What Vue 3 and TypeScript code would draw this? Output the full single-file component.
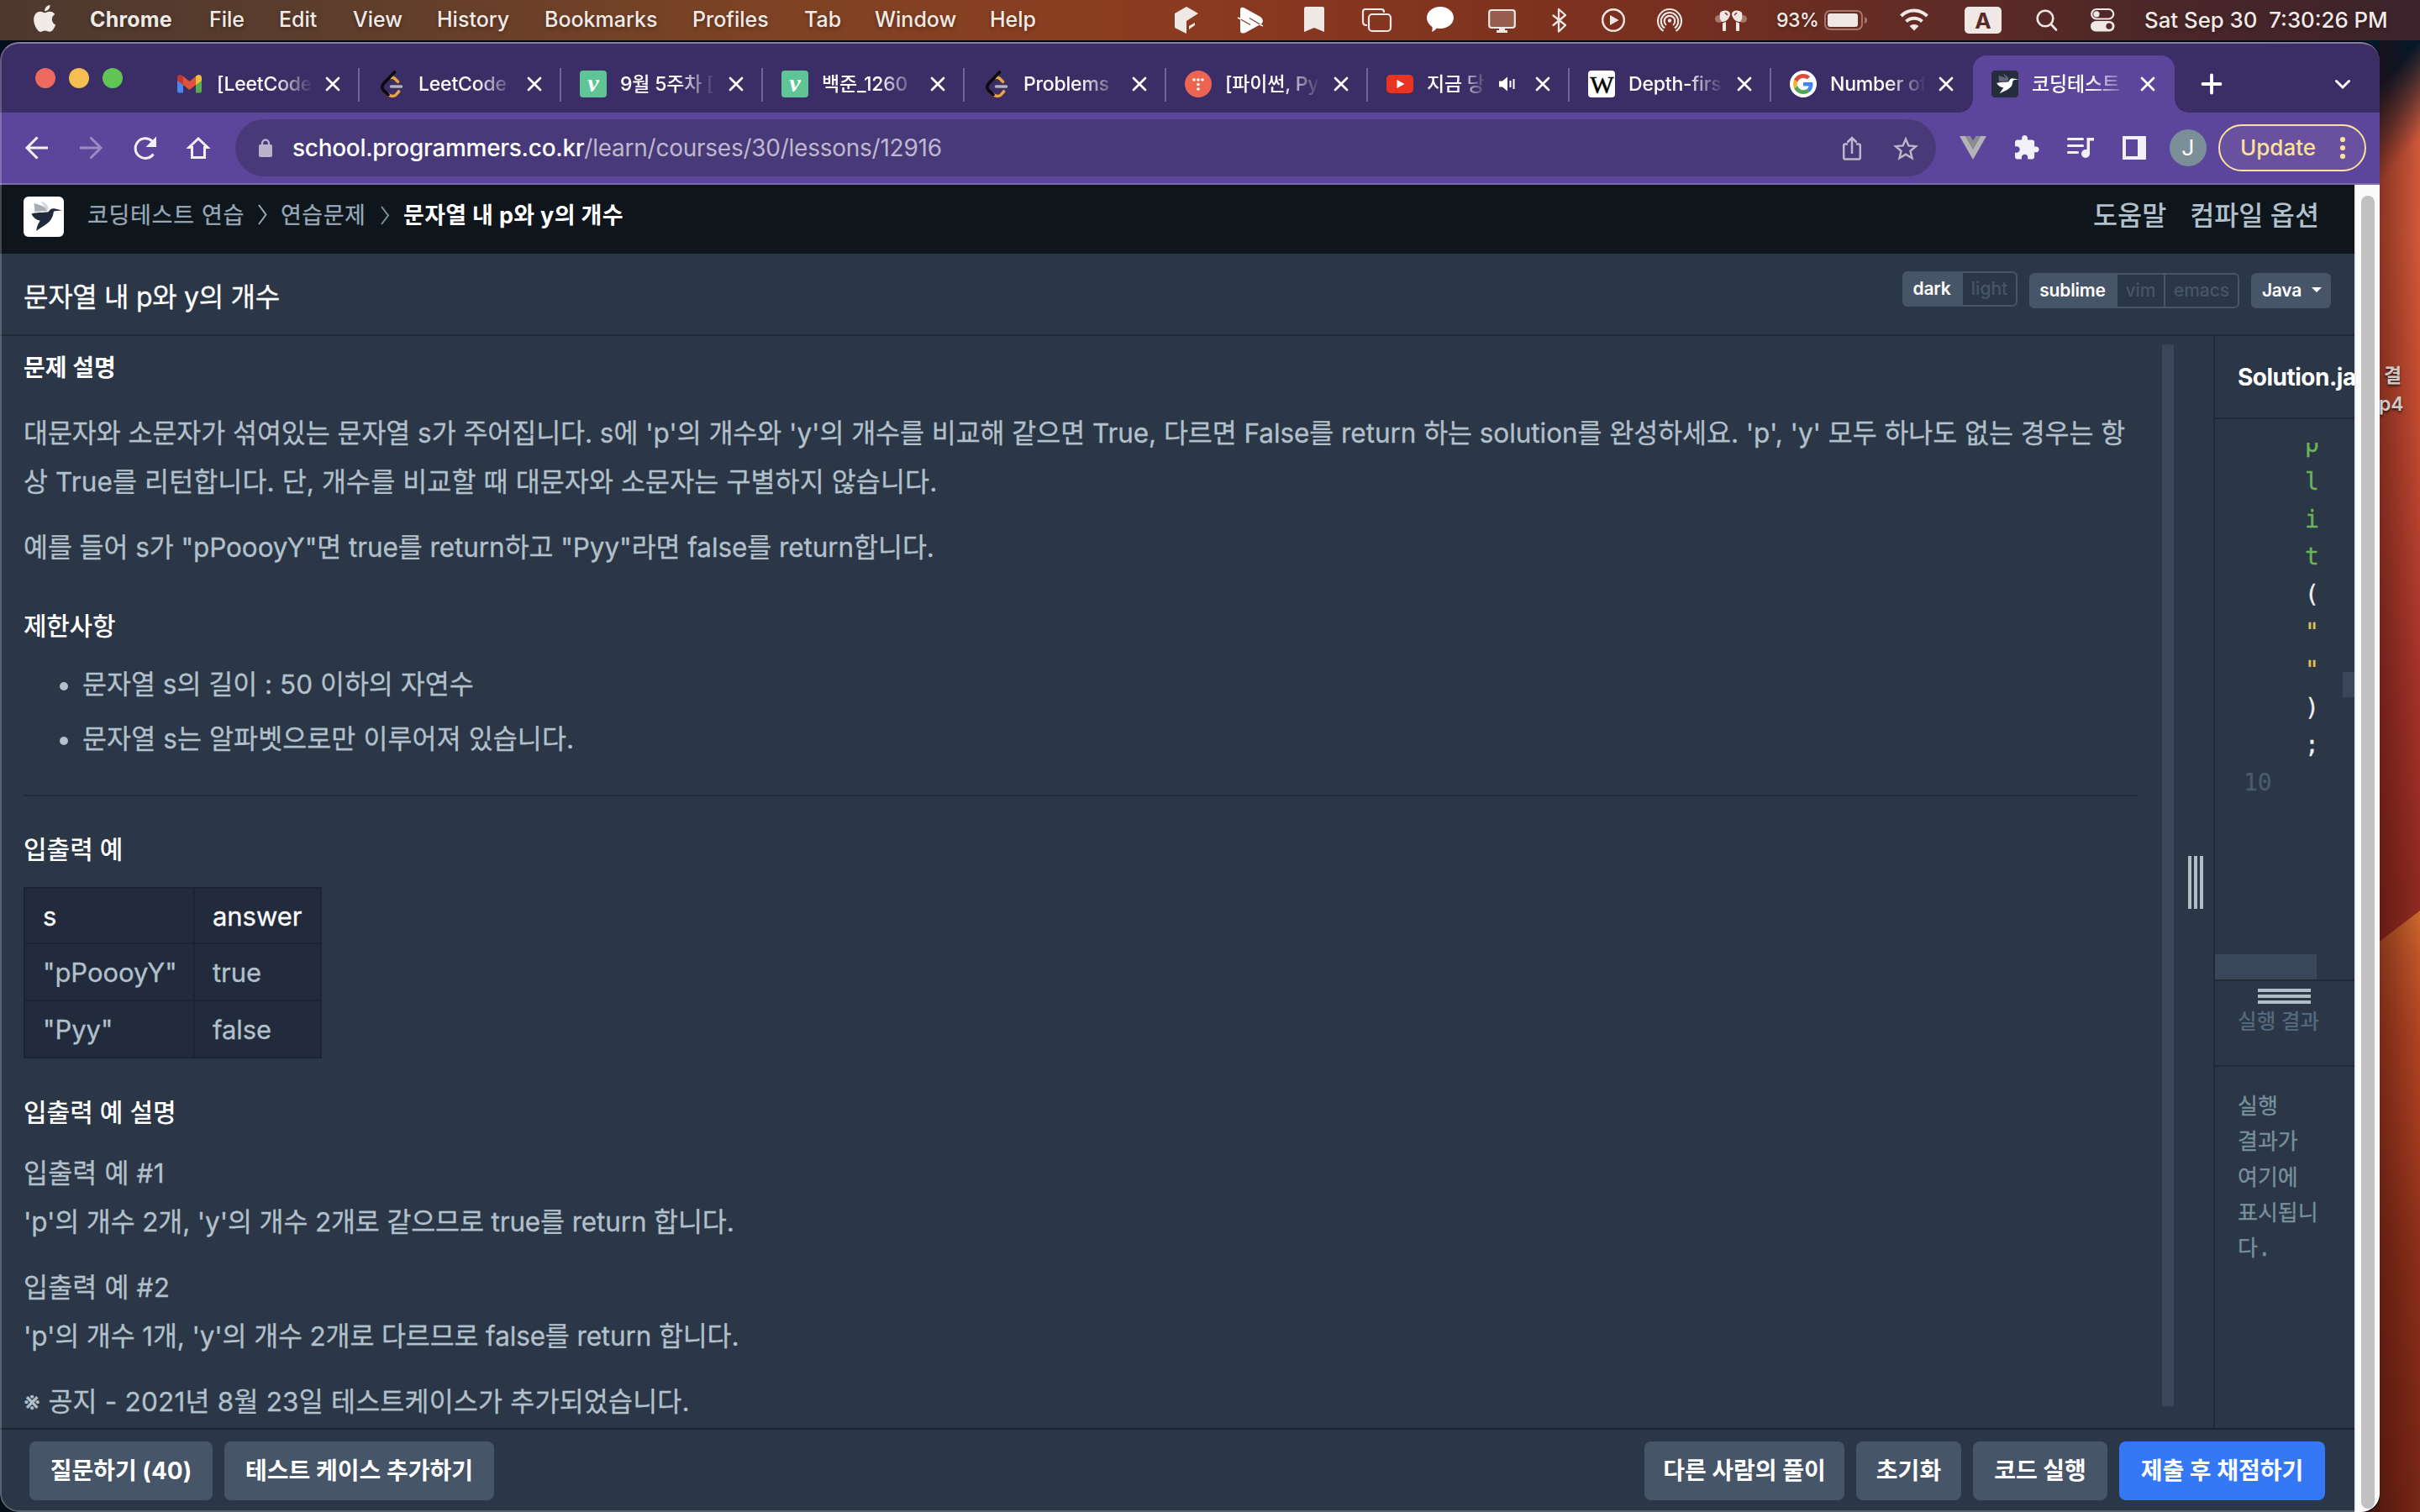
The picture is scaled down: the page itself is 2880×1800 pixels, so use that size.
<script setup lang="ts">
interface MenuItem { label: string; width: number; bold?: boolean }
interface Tab { icon: string; title: string; audio?: boolean; active?: boolean }

const menu: MenuItem[] = [
  { label: 'Chrome', width: 142, bold: true },
  { label: 'File', width: 83 },
  { label: 'Edit', width: 88 },
  { label: 'View', width: 100 },
  { label: 'History', width: 128 },
  { label: 'Bookmarks', width: 176 },
  { label: 'Profiles', width: 133 },
  { label: 'Tab', width: 84 },
  { label: 'Window', width: 137 },
  { label: 'Help', width: 100 },
]

const tabs: Tab[] = [
  { icon: 'gmail', title: '[LeetCode' },
  { icon: 'leet', title: 'LeetCode' },
  { icon: 'velog', title: '9월 5주차 [' },
  { icon: 'velog', title: '백준_1260' },
  { icon: 'leet', title: 'Problems' },
  { icon: 'tistory', title: '[파이썬, Py' },
  { icon: 'youtube', title: '지금 당', audio: true },
  { icon: 'wiki', title: 'Depth-firs' },
  { icon: 'google', title: 'Number of' },
  { icon: 'bird', title: '코딩테스트', active: true },
]

const code: { ch: string; kind: string }[] = [
  { ch: 'p', kind: 'fn' },
  { ch: 'l', kind: 'fn' },
  { ch: 'i', kind: 'fn' },
  { ch: 't', kind: 'fn' },
  { ch: '(', kind: 'pl' },
  { ch: '"', kind: 'str' },
  { ch: '"', kind: 'str' },
  { ch: ')', kind: 'pl' },
  { ch: ';', kind: 'pl' },
]

const rows: [string, string][] = [
  ['"pPoooyY"', 'true'],
  ['"Pyy"', 'false'],
]
</script>

<template>
  <div class="desktop">
    <header class="menubar">
      <svg class="apple" width="107" height="48" viewBox="0 0 107 48">
        <path transform="translate(37.2 6) scale(1.33)" fill="#f1eae7" d="M12.152 6.896c-.948 0-2.415-1.078-3.96-1.04-2.04.027-3.91 1.183-4.961 3.014-2.117 3.675-.546 9.103 1.519 12.09 1.013 1.454 2.208 3.09 3.792 3.039 1.52-.065 2.09-.987 3.935-.987 1.831 0 2.35.987 3.96.948 1.637-.026 2.676-1.48 3.676-2.948 1.156-1.688 1.636-3.325 1.662-3.415-.039-.013-3.182-1.221-3.22-4.857-.026-3.04 2.48-4.494 2.597-4.559-1.429-2.09-3.623-2.324-4.39-2.376-2-.156-3.675 1.09-4.61 1.09zM15.53 3.83c.843-1.012 1.4-2.427 1.245-3.83-1.207.052-2.662.805-3.532 1.818-.78.896-1.454 2.338-1.273 3.714 1.338.104 2.715-.688 3.559-1.701" />
      </svg>
      <nav class="menus">
        <span v-for="m in menu" :key="m.label" :class="{ bold: m.bold }" :style="{ width: m.width + 'px' }">{{ m.label }}</span>
      </nav>
      <div class="status">
        <svg width="70" height="48" viewBox="1380 0 70 48">
          <path fill="#efe8e5" d="M1412 8l14 8-14 9v15l-14-7V16zM1415 31l7-4v3l-7 5z" />
        </svg>
        <svg width="76" height="48" viewBox="1450 0 76 48">
          <path fill="#fff" d="M1476 12q0-4 4-3l20 11q3 2 3 5-.500 3-3 4l-18 10q-6 2-6-3z" />
          <path stroke="#8a3a20" stroke-width="1.300" d="M1473 21l15 8.500M1487 21.500l15 9" />
          <path stroke="#fff" stroke-width="1.600" d="M1473 21l4 2M1499 29l4 2" />
        </svg>
        <svg width="74" height="48" viewBox="1526 0 74 48">
          <path fill="#efe8e5" d="M1552 10q0-2 2-2h20q2 0 2 2v28l-12-5-12 5z" />
        </svg>
        <svg width="76" height="48" viewBox="1600 0 76 48" fill="none" stroke="#efe8e5" stroke-width="2.200">
          <path d="M1627 30h-1q-4 0-4-4V14q0-3 3-3h19q3 0 3 3v1" />
          <rect x="1629" y="17" width="26" height="20" rx="4" />
        </svg>
        <svg width="74" height="48" viewBox="1676 0 74 48">
          <path fill="#fff" d="M1714 8c9 0 16 6 16 13s-7 13-16 13q-2 0-4-.500-3 3.500-6 4.500 1-3 .500-6c-4-2.500-6.500-6.500-6.500-11 0-7 7-13 16-13z" />
        </svg>
        <svg width="70" height="48" viewBox="1750 0 70 48">
          <rect x="1772.200" y="12" width="30.600" height="21" rx="3" fill="#985e4d" stroke="#efe8e5" stroke-width="2.200" />
          <path fill="#efe8e5" d="M1784 34h7v2h3v3h-13v-3h3z" />
        </svg>
        <svg width="68" height="48" viewBox="1820 0 68 48">
          <path fill="none" stroke="#efe8e5" stroke-width="2.300" stroke-linejoin="round" stroke-linecap="round" d="M1848.500 18.500l14.500 11.500-8 7.500V11l8 7-14.500 12" />
        </svg>
        <svg width="64" height="48" viewBox="1888 0 64 48">
          <circle cx="1920" cy="24" r="12.800" fill="none" stroke="#efe8e5" stroke-width="2.400" />
          <path fill="#efe8e5" d="M1916 18l10.500 6-10.500 6z" />
        </svg>
        <svg width="72" height="48" viewBox="1952 0 72 48" fill="none" stroke="#efe8e5" stroke-width="2.100">
          <circle cx="1987" cy="24.500" r="2.200" fill="#efe8e5" stroke="none" />
          <path d="M1979.500 36.800a14 14 0 1 1 15 0M1981 33.500a10.200 10.200 0 1 1 12 0M1983 30a6.300 6.300 0 1 1 8 0" />
        </svg>
        <svg width="76" height="48" viewBox="2024 0 76 48">
          <circle cx="2045.500" cy="22.500" r="4.500" fill="#a97467" />
          <circle cx="2074.500" cy="22.500" r="4.500" fill="#a97467" />
          <path fill="#efe8e5" d="M2047 15c4-4 11-3 12 1 0 6-5 10-9 10-3 0-4-6-3-11zM2050 27.500l4-1.500v10.500q-2 1-4 0zM2073 15c-4-4-11-3-12 1 0 6 5 10 9 10 3 0 4-6 3-11zM2070 27.500l-4-1.500v10.500q2 1 4 0z" />
          <path stroke="#7a3526" stroke-width="1.500" d="M2053 15l3 3M2067 15l-3 3" />
        </svg>
        <span class="pct">93%</span>
        <svg width="66" height="48" viewBox="2164 0 66 48">
          <rect x="2172" y="13" width="44" height="22" rx="6" fill="none" stroke="#a5786f" stroke-width="2" />
          <rect x="2175" y="16" width="36" height="16" rx="3" fill="#efe8e5" />
          <path fill="#a5786f" d="M2219 20q3 1 3 4t-3 4z" />
        </svg>
        <svg width="96" height="48" viewBox="2230 0 96 48" fill="none" stroke="#efe8e5" stroke-width="4">
          <path d="M2262.500 19a22 22 0 0 1 31 0M2268.500 25.500a14 14 0 0 1 19 0" />
          <path fill="#efe8e5" stroke="none" d="M2272.500 31a8.500 8.500 0 0 1 11 0l-5.500 5.500z" />
        </svg>
        <span class="ime">A</span>
        <svg width="64" height="48" viewBox="2394 0 64 48" fill="none" stroke="#efe8e5" stroke-width="2.600" stroke-linecap="round">
          <circle cx="2434" cy="22" r="9.300" />
          <path d="M2441 29l6 6.500" />
        </svg>
        <svg width="80" height="48" viewBox="2458 0 80 48">
          <rect x="2489.200" y="11" width="26" height="11.500" rx="5.700" fill="none" stroke="#efe8e5" stroke-width="2.200" />
          <circle cx="2495" cy="16.800" r="3.600" fill="#efe8e5" />
          <rect x="2488" y="25" width="28.500" height="12.500" rx="6.200" fill="#efe8e5" />
          <circle cx="2510" cy="31.200" r="3.600" fill="#55292a" />
        </svg>
        <span class="clock">Sat Sep 30&nbsp; 7:30:26 PM</span>
      </div>
    </header>

    <div class="below">
      <section class="window">
        <div class="tabstrip">
          <div class="lights"><i class="r"></i><i class="y"></i><i class="g"></i></div>
          <div v-for="(t, n) in tabs" :key="n" class="tab" :class="{ active: t.active, sep: n < 8 }">
            <svg v-if="t.icon === 'gmail'" class="fav" viewBox="0 0 32 32">
              <path fill="#4c86ec" d="M1 8v16.500Q1 26.500 3 26.500h5V14z" />
              <path fill="#5aac50" d="M30 8v16.500q0 2-2 2h-5V14z" />
              <path fill="#c5382c" d="M1 12V8.500C1 5 4.500 4 7 6l1 .800V17z" />
              <path fill="#e0523f" d="M8 6.800l7.500 6.200L23 6.800V17l-7.500 6L8 17z" />
              <path fill="#f4bc3c" d="M30 12V8.500C30 5 26.500 4 24 6l-1 .800V17z" />
            </svg>
            <svg v-else-if="t.icon === 'leet'" class="fav" viewBox="0 0 32 32" fill="none" stroke-width="3.600" stroke-linecap="round">
              <path stroke="#efa33c" d="M15.500 8.500q2-1 4 .800l4 4M12 28.500c4 3 8 2 10-.500l2.500-3" />
              <path stroke="#0b0b0b" d="M19.500 2L6.500 15.500q-3.500 4 0 8l5.500 5.300" />
              <path stroke="#b3b3b3" d="M15.500 19h12" />
            </svg>
            <span v-else-if="t.icon === 'velog'" class="fav velog">v</span>
            <svg v-else-if="t.icon === 'tistory'" class="fav" viewBox="0 0 32 32">
              <circle cx="16" cy="16" r="16" fill="#ec6553" />
              <g fill="#fff">
                <circle cx="11" cy="11" r="1.800" /><circle cx="16" cy="11" r="1.800" /><circle cx="21" cy="11" r="1.800" />
                <circle cx="16" cy="16.500" r="1.800" /><circle cx="16" cy="22" r="1.800" />
              </g>
            </svg>
            <svg v-else-if="t.icon === 'youtube'" class="fav" viewBox="0 0 32 32">
              <rect y="5" width="32" height="22" rx="5" fill="#ea3423" />
              <path fill="#fff" d="M12.500 11l9 5-9 5z" />
            </svg>
            <span v-else-if="t.icon === 'wiki'" class="fav wiki">W</span>
            <svg v-else-if="t.icon === 'google'" class="fav" viewBox="0 0 32 32">
              <circle cx="16" cy="16" r="16" fill="#fff" />
              <g transform="translate(4 4)">
                <path fill="#4285f4" d="M23.500 12.300c0-.900-.100-1.500-.200-2.200H12v4.400h6.600c-.100 1.100-.900 2.700-2.500 3.800l3.800 3c2.300-2.200 3.600-5.300 3.600-9z" />
                <path fill="#4fa559" d="M12 24c3.200 0 6-1.100 7.900-2.900l-3.800-3c-1 .700-2.400 1.200-4.100 1.200-3.200 0-5.900-2.100-6.800-5l-4 3C3.200 21.300 7.300 24 12 24z" />
                <path fill="#f3b72e" d="M5.200 14.300c-.200-.700-.400-1.500-.400-2.300s.100-1.600.400-2.300L1.200 6.600C.4 8.200 0 10 0 12s.400 3.800 1.200 5.400z" />
                <path fill="#dd4b3c" d="M12 4.700c2.300 0 3.800 1 4.700 1.800l3.400-3.300C18 1.200 15.200 0 12 0 7.300 0 3.200 2.700 1.200 6.600l4 3.100c.900-2.900 3.600-5 6.800-5z" />
              </g>
            </svg>
            <svg v-else class="fav" viewBox="0 0 32 32">
              <rect width="32" height="32" rx="3.500" fill="#242c3d" />
              <path fill="#60677a" d="M8.500 6l.500 7 10.500-.500C19 9 14 7.500 8.500 6zM14 4l5.500 8.500 1-3C19.500 7 17 5 14 4z" />
              <path fill="#fff" d="M32 10.200l-6.500-.800c-2.500-.500-4 1.600-5 3.800-4.500.800-10.500.300-14.200 1.600 1.200 3.200 4.200 5.200 8.200 5.700-1.500 2-3.700 4.500-4.500 6.700 6-3 12-5 14.300-9.700 1.100-2.500.700-4.500 1.700-6z" />
            </svg>
            <span class="title" :class="{ short: t.audio }">{{ t.title }}</span>
            <svg v-if="t.audio" class="audio" width="24" height="24" viewBox="0 0 24 24">
              <path fill="#fff" d="M2 8.500h4l6-5v17l-6-5H2z" />
              <path stroke="#fff" stroke-width="2" d="M15.500 8v8M19.500 6v12" />
            </svg>
            <svg class="x" width="18" height="18" viewBox="0 0 18 18"><path stroke="#fff" stroke-width="2.700" stroke-linecap="round" d="M2 2l14 14M16 2L2 16" /></svg>
          </div>
          <svg class="plus" width="240" height="84" viewBox="2588 50 240 84" fill="none" stroke="#fff" stroke-linecap="round">
            <path stroke-width="3.800" d="M2621.500 100h21M2632 89.500v21" />
            <path stroke-width="3" d="M2780.500 96.500l7.500 7.500 7.500-7.500" />
          </svg>
        </div>

        <div class="toolbar">
          <svg width="280" height="84" viewBox="0 134 280 84" fill="none" stroke="#f3f1f8" stroke-width="3">
            <path d="M57 176H33M44.500 163.500L32 176l12.500 12.500" />
            <path stroke="#998cc3" d="M95 176h24M107.500 163.500L120 176l-12.500 12.500" />
            <path d="M182.500 183.500A11.800 11.800 0 1 1 181 168" />
            <path fill="#f3f1f8" stroke="none" d="M186 162.500V175h-12.500z" />
            <path d="M228.500 187.500V175.500H225L236 165l11 10.500h-3.500v12z" stroke-linejoin="miter" />
          </svg>
          <div class="omnibox">
            <svg width="68" height="68" viewBox="280 142 68 68">
              <rect x="308" y="172" width="16" height="15" rx="2" fill="#b9b3cb" />
              <path fill="none" stroke="#b9b3cb" stroke-width="2.400" d="M312 173v-2a4 4.500 0 0 1 8 0v2" />
            </svg>
            <span class="url"><b>school.programmers.co.kr</b>/learn/courses/30/lessons/12916</span>
            <svg class="end" width="134" height="68" viewBox="2170 142 134 68" fill="none" stroke="#bdb8c9" stroke-width="2.500">
              <path d="M2199 171.500h-3q-1.800 0-1.800 1.800v14.500q0 1.800 1.800 1.800h16q1.800 0 1.800-1.800v-14.500q0-1.800-1.800-1.800h-3M2204 183v-18M2198.500 169.500l5.500-5.500 5.500 5.500" />
              <path stroke-width="2.400" d="M2268 165.500l3.400 7.900 8.600.7-6.500 5.700 2 8.400-7.500-4.500-7.500 4.500 2-8.400-6.500-5.700 8.600-.7z" />
            </svg>
          </div>
          <svg width="278" height="84" viewBox="2304 134 278 84">
            <path fill="#b3b3b3" d="M2332 162h7l9 15.500 9-15.500h7l-16 28z" />
            <path fill="#8c8c8c" d="M2339 162h6l3 5.500 3.500-5.500h5.500l-9 15.500z" />
            <path fill="#f3f1f8" transform="translate(2395.300 159.600) scale(1.360)" d="M20.500 11H19V7c0-1.100-.900-2-2-2h-4V3.500C13 2.120 11.880 1 10.500 1S8 2.120 8 3.500V5H4c-1.100 0-1.990.900-1.990 2v3.800H3.500c1.490 0 2.700 1.210 2.700 2.700s-1.210 2.700-2.700 2.700H2V20c0 1.100.900 2 2 2h3.800v-1.500c0-1.490 1.210-2.700 2.700-2.700 1.490 0 2.700 1.210 2.700 2.700V22H17c1.100 0 2-.900 2-2v-4h1.500c1.380 0 2.500-1.120 2.500-2.500S21.880 11 20.500 11z" />
            <path stroke="#f3f1f8" stroke-width="3.200" fill="none" stroke-linecap="round" d="M2461.500 165.500h17M2461.500 173.500h17M2461.500 181.500h11" />
            <circle cx="2482" cy="183" r="5" fill="#f3f1f8" />
            <path fill="#f3f1f8" d="M2483.500 164h8.500v3.500h-5V183h-3.500z" />
            <path fill="#f3f1f8" fill-rule="evenodd" d="M2526 162h28v28h-28zM2530 166v20h14v-20z" />
          </svg>
          <span class="avatar">J</span>
          <span class="update">Update<svg width="8" height="28" viewBox="0 0 8 28" fill="#fbe19c"><circle cx="4" cy="4" r="3.100" /><circle cx="4" cy="14" r="3.100" /><circle cx="4" cy="24" r="3.100" /></svg></span>
        </div>

        <div class="viewport">
          <main class="page">
            <div class="crumbs">
              <svg class="logo" width="48" height="48" viewBox="0 0 48 48">
                <rect width="48" height="48" rx="6" fill="#fff" />
                <g transform="translate(.5 -.5) scale(1.420)">
                  <path fill="#a7adb5" d="M8.500 6l.500 7 10.500-.500C19 9 14 7.500 8.500 6z" />
                  <path fill="#d3d6da" d="M14 4l5.500 8.500 1-3C19.500 7 17 5 14 4z" />
                  <path fill="#1f2a3a" d="M32 12l-6.500-1.600c-2.500-.500-4 1-5 2.800-4.500.800-10.500.300-14.200 1.600 1.200 3.200 4.200 5.200 7.200 5.700-1 2-3 5-3 8.700 5-4 11-6 13.300-11.700 1.100-2.500.700-4.500 1.700-5z" />
                </g>
              </svg>
              <span class="c1">코딩테스트 연습</span>
              <svg width="44" height="48" viewBox="290 234 44 48"><path fill="none" stroke="#98a8b9" stroke-width="2" d="M308 244l8.500 11.500-8.500 11.500" /></svg>
              <span class="c2">연습문제</span>
              <svg width="44" height="48" viewBox="436 234 44 48"><path fill="none" stroke="#78909c" stroke-width="2" d="M454 246l8 10.500-8 10.500" /></svg>
              <span class="c3">문자열 내 p와 y의 개수</span>
              <span class="links"><span>도움말</span><span>컴파일 옵션</span></span>
            </div>

            <div class="headline">
              <h1>문자열 내 p와 y의 개수</h1>
              <div class="opts">
                <div class="group g1"><span class="on">dark</span><span>light</span></div>
                <div class="group g2"><span class="on">sublime</span><span>vim</span><span>emacs</span></div>
                <div class="java">Java<i></i></div>
              </div>
            </div>

            <div class="work">
              <article class="guide">
                <h2 class="h-first">문제 설명</h2>
                <p class="p1"><span class="ln1">대문자와 소문자가 섞여있는 문자열 s가 주어집니다. s에 'p'의 개수와 'y'의 개수를 비교해 같으면 True, 다르면 False를 return 하는 solution를 완성하세요. 'p', 'y' 모두 하나도 없는 경우는 항</span><span class="ln2">상 True를 리턴합니다. 단, 개수를 비교할 때 대문자와 소문자는 구별하지 않습니다.</span></p>
                <p class="p2">예를 들어 s가 "pPoooyY"면 true를 return하고 "Pyy"라면 false를 return합니다.</p>
                <h2 class="h-limit">제한사항</h2>
                <ul>
                  <li class="i1">문자열 s의 길이 : 50 이하의 자연수</li>
                  <li class="i2">문자열 s는 알파벳으로만 이루어져 있습니다.</li>
                </ul>
                <hr />
                <h2 class="h-io">입출력 예</h2>
                <table>
                  <thead><tr><th class="ca">s</th><th>answer</th></tr></thead>
                  <tbody><tr v-for="r in rows" :key="r[0]"><td>{{ r[0] }}</td><td>{{ r[1] }}</td></tr></tbody>
                </table>
                <h2 class="h-exp">입출력 예 설명</h2>
                <p class="e1"><span class="a">입출력 예 #1</span><span class="b">'p'의 개수 2개, 'y'의 개수 2개로 같으므로 true를 return 합니다.</span></p>
                <p class="e2"><span class="a">입출력 예 #2</span><span class="b">'p'의 개수 1개, 'y'의 개수 2개로 다르므로 false를 return 합니다.</span></p>
                <p class="e3">※ 공지 - 2021년 8월 23일 테스트케이스가 추가되었습니다.</p>
              </article>
              <div class="gscroll"></div>
              <div class="gutter"><i></i><i></i><i></i></div>
              <aside class="run">
                <div class="file">Solution.java</div>
                <div class="editor">
                  <div class="lines">
                    <div v-for="(c, n) in code" :key="n" class="cl" :class="c.kind">{{ c.ch }}</div>
                    <div class="num">10</div>
                  </div>
                  <div class="vthumb"></div>
                </div>
                <div class="hthumb"></div>
                <div class="result-head">
                  <div class="grip"><i></i><i></i><i></i></div>
                  <span>실행 결과</span>
                </div>
                <div class="result"><div>실행</div><div>결과가</div><div>여기에</div><div>표시됩니</div><div>다.</div></div>
              </aside>
            </div>

            <footer class="actions">
              <button class="w1">질문하기 (40)</button>
              <button class="w2">테스트 케이스 추가하기</button>
              <span class="grow"></span>
              <button class="w3">다른 사람의 풀이</button>
              <button class="w4">초기화</button>
              <button class="w5">코드 실행</button>
              <button class="w6 blue">제출 후 채점하기</button>
            </footer>
          </main>
          <div class="scrollbar"><div class="thumb"></div></div>
        </div>
      </section>
      <div class="icons"><div class="d1">결</div><div class="d2">p4</div></div>
    </div>
  </div>
</template>

<style>
html, body { margin: 0; overflow: hidden; background: #000; }
</style>

<style scoped>
* { box-sizing: border-box; }
.desktop {
  width: 2880px; height: 1800px; overflow: hidden; display: flex; flex-direction: column;
  font-family: Inter, "Noto Sans CJK KR", sans-serif; white-space: nowrap; background: #04121f;
}
svg { display: block; flex: none; }
.menubar {
  height: 48px; flex: none; display: flex; align-items: stretch; color: #f1eae7; font-size: 25px; line-height: 47px;
  background: linear-gradient(90deg, #4e382f 0, #5a3d2d 340px, #7d4324 900px, #8b3d20 1300px, #86361f 1600px, #78301f 1960px, #602b26 2300px, #4c2728 2560px, #3c232c 2880px);
  text-shadow: 0 2px 5px rgba(0, 0, 0, .35);
}
.menus { display: flex; width: 1273px; font-weight: 500; }
.menus .bold { font-weight: 700; letter-spacing: .2px; }
.status { display: flex; }
.pct { width: 64px; padding-left: 14px; font-size: 23px; letter-spacing: -.5px; font-weight: 500; line-height: 49px; }
.ime { width: 44px; height: 32px; margin: 8px 12px 0; background: #efe8e5; color: #5b2a28; border-radius: 5px; font-size: 26px; font-weight: 700; line-height: 33px; text-align: center; text-shadow: none; }
.clock { padding-left: 14px; font-weight: 500; font-size: 25.800px; }
.below { flex: 1; display: flex; min-height: 0;
  background: linear-gradient(90deg, #03101c 0, #03101c 2700px, transparent 2800px), linear-gradient(#04182b 0, #04182b 60px, #4a170f 1600px); }
.window { position: relative; width: 2832px; margin-top: 2px; height: 1750px; border-radius: 22px; overflow: hidden; display: flex; flex-direction: column; box-shadow: 0 0 0 1px #000; flex: none; }
.window::after { content: ""; position: absolute; inset: 0; border: 2px solid rgba(255, 255, 255, .22); border-top-color: rgba(255, 255, 255, .38); border-right: 0; border-radius: 22px; }
.tabstrip { height: 84px; flex: none; display: flex; background: #3b2d66; }
.lights { width: 188px; padding: 31px 0 0 42px; display: flex; gap: 16px; }
.lights i { width: 24px; height: 24px; border-radius: 50%; }
.r { background: #ec6a5e; }
.y { background: #f4bf50; }
.g { background: #61c554; }
.tab { position: relative; width: 240px; height: 84px; flex: none; display: flex; align-items: center; padding: 16px 0 0 22px; color: #fff; }
.tab.sep::after { content: ""; position: absolute; right: 0; top: 31px; width: 2px; height: 40px; background: #6f6491; }
.tab.active { height: 68px; margin: 16px 0 0; padding-top: 0; background: #5b469c; border-radius: 16px 16px 0 0; }
.tab.active::before, .tab.active::after { content: ""; position: absolute; bottom: 0; width: 16px; height: 16px; }
.tab.active::before { left: -16px; background: radial-gradient(circle at 0 0, transparent 15.500px, #5b469c 16px); }
.tab.active::after { right: -16px; background: radial-gradient(circle at 100% 0, transparent 15.500px, #5b469c 16px); }
.fav { width: 32px; height: 32px; flex: none; border-radius: 4px; }
.velog { background: #5fc596; color: #fff; font: italic 700 30px/30px "Liberation Serif", serif; text-align: center; }
.wiki { background: #fff; color: #000; font: 400 30px/33px "Liberation Serif", serif; text-align: center; text-indent: 1px; -webkit-text-stroke: .5px #000; }
.title { width: 114px; margin-left: 16px; font-size: 23px; line-height: 34px; font-weight: 500; letter-spacing: -.2px; -webkit-mask-image: linear-gradient(90deg, #000 68px, transparent 114px); mask-image: linear-gradient(90deg, #000 68px, transparent 114px); }
.title.short { width: 68px; -webkit-mask-image: linear-gradient(90deg, #000 36px, transparent 72px); mask-image: linear-gradient(90deg, #000 36px, transparent 72px); }
.audio { margin: 0 6px 0 16px; }
.x { margin-left: 15px; }
.toolbar { height: 86px; flex: none; display: flex; background: #5b469c; border-bottom: 2px solid #7f6bb3; }
.omnibox { width: 2024px; height: 68px; margin-top: 8px; border-radius: 34px; background: #483a78; display: flex; line-height: 68px; }
.url { font-size: 28px; color: #beb8cf; letter-spacing: -.25px; }
.url b { font-weight: 450; color: #fff; letter-spacing: -.3px; }
.end { margin-left: auto; }
.avatar { width: 44px; height: 44px; margin: 20px 14px 0 0; border-radius: 50%; background: #7b8f99; color: #fff; font: 26px/44px Roboto, sans-serif; text-align: center; }
.update { width: 176px; height: 56px; margin-top: 14px; border: 2px solid #fbe19c; border-radius: 28px; background: #69519f; color: #fbe19c; font-size: 26px; line-height: 52px; font-weight: 500; display: flex; align-items: center; justify-content: space-between; padding: 0 22px 0 24px; }
.viewport { flex: 1; display: flex; min-height: 0; background: #2b3746; }
.page { width: 2802px; display: flex; flex-direction: column; }
.scrollbar { width: 30px; background: #fafafa; border-left: 2px solid #ececec; padding: 13px 0 4px 6px; }
.thumb { width: 16px; height: 100%; border-radius: 8px; background: #c1c1c1; }
.crumbs { height: 82px; flex: none; background: #0e151b; display: flex; padding: 14px 0 0 28px; color: #98a8b9; line-height: 45px; font-size: 27px; }
.c1 { width: 186px; margin-left: 28px; letter-spacing: .7px; -webkit-text-stroke: .3px; }
.c2 { width: 102px; letter-spacing: .5px; -webkit-text-stroke: .3px; }
.c3 { color: #fff; font-weight: 700; letter-spacing: .3px; }
.links { margin-left: auto; display: flex; gap: 28px; padding-right: 42px; font-size: 31.600px; color: #b2c0cc; font-weight: 500; line-height: 46px; }
.headline { height: 98px; flex: none; border-bottom: 2px solid #202a38; display: flex; justify-content: space-between; padding-left: 28px; }
h1 { margin: 0; font-size: 32px; font-weight: 400; color: #fff; line-height: 103px; letter-spacing: -.3px; -webkit-text-stroke: .3px; }
.opts { display: flex; font-size: 21px; font-weight: 600; padding: 21px 28px 0 0; line-height: 38px; }
.group { display: flex; height: 42px; border: 2px solid #475569; border-radius: 6px; color: #475569; font-weight: 500; margin-right: 14px; }
.group span { text-align: center; border-left: 2px solid #475569; }
.group .on { background: #475569; color: #fff; font-weight: 600; border: 0; letter-spacing: -.2px; }
.g1 .on { width: 68px; padding-right: 2px; }
.g1 span { width: 65px; }
.g2 { margin-top: 2px; }
.g2 .on { width: 101px; padding-right: 2px; }
.g2 span { width: 57px; }
.g2 span:last-child { width: 88px; }
.java { width: 95px; height: 42px; margin-top: 2px; border-radius: 6px; background: #475569; color: #fff; line-height: 42px; display: flex; align-items: center; padding-left: 13px; font-weight: 600; letter-spacing: -.3px; }
.java i { margin: -3px 0 0 12px; border: 6px solid transparent; border-top-color: #fff; border-bottom: 0; }
.work { height: 1300px; flex: none; display: flex; }
.guide { width: 2573px; padding: 18px 0 0 28px; color: #b2c0cc; font-size: 31.500px; line-height: 58px; }
.guide p, .guide li, .guide td, .guide th { -webkit-text-stroke: .3px; }
.guide > * { margin: 0; }
.guide span { display: block; }
h2 { color: #fff; font-size: 30px; line-height: 40px; font-weight: 500; }
h2.h-first { font-size: 28px; font-weight: 700; }
.guide .p1 { margin-top: 29px; }
.ln1 { letter-spacing: -.055px; }
.ln2 { letter-spacing: .12px; }
.guide .p2 { margin-top: 20px; letter-spacing: -.08px; }
.guide .h-limit { margin-top: 44px; letter-spacing: -.3px; }
ul { list-style: none; padding: 0; }
.guide ul { margin-top: 21px; }
li { display: flex; align-items: center; padding-left: 43px; }
li + li { margin-top: 7px; letter-spacing: .1px; }
li::before { content: ""; width: 10px; height: 10px; margin: 4px 17px 0 0; border-radius: 50%; background: #b2c0cc; }
hr { border: 0; height: 2px; background: #202a38; width: 2517px; }
.guide hr { margin-top: 37px; }
.guide .h-io { margin-top: 43px; }
table { border-collapse: collapse; background: #222b3c; width: 355px; height: 204px; }
.guide table { margin-top: 25px; }
th, td { border: 2px solid #1b2433; padding: 2px 0 0 21px; text-align: left; font-weight: 400; line-height: 60px; height: 66px; font-size: 31px; letter-spacing: -.05px; }
th { color: #fff; }
.ca { width: 202px; }
.guide .h-exp { margin-top: 44px; }
.guide .e1 { margin-top: 24px; }
.a { letter-spacing: .15px; }
.b { letter-spacing: -.14px; }
.guide .e2, .guide .e3 { margin-top: 20px; }
.e3 { letter-spacing: .2px; }
.gscroll { width: 14px; height: 1264px; margin-top: 10px; background: #3a475a; }
.gutter { width: 47px; padding: 619px 0 0 17px; display: flex; gap: 3px; }
.gutter i { width: 4px; height: 63px; background: #b0bec5; }
.run { width: 168px; border-left: 2px solid #202a38; overflow: hidden; }
.file { height: 99px; padding-left: 27px; border-bottom: 2px solid #202a38; color: #fff; font-size: 28px; font-weight: 700; line-height: 98px; letter-spacing: -.5px; }
.editor { height: 637px; display: flex; justify-content: space-between; font-family: "DejaVu Sans Mono", monospace; font-size: 28px; line-height: 44.800px; overflow: hidden; clip-path: inset(28px 0 0 0); -webkit-text-stroke: .3px; }
.lines { padding-top: 8px; }
.cl { padding-left: 107px; }
.fn { color: #6ab35c; }
.str { color: #e0c15b; }
.pl { color: #f0f0f0; }
.num { padding-left: 34px; color: #4b5b6e; }
.vthumb { width: 14px; height: 30px; margin-top: 301px; background: #3a475a; }
.hthumb { width: 121px; height: 30px; background: #3a475a; }
.result-head { height: 104px; border-top: 2px solid #202a38; border-bottom: 2px solid #202a38; color: #56687e; font-size: 24.600px; line-height: 34px; font-weight: 500; padding-left: 27px; }
.grip { padding: 9px 0 0 24px; margin-bottom: 4px; display: flex; flex-direction: column; gap: 3px; }
.grip i { width: 63px; height: 4px; background: #b0bec5; }
.result { padding: 26px 0 0 27px; color: #78909c; font: 26px/42.300px "DejaVu Sans Mono", "Noto Sans CJK KR", monospace; -webkit-text-stroke: .3px; }
.actions { flex: 1; border-top: 2px solid #1c2533; display: flex; padding: 14px 35px 0 35px; gap: 14px; }
button { height: 70px; border: 0; padding: 0; border-radius: 8px; background: #475569; color: #fff; font: 700 28px/68px Inter, "Noto Sans CJK KR", sans-serif; text-align: center; }
.grow { flex: 1; }
.w1 { width: 218px; }
.w2 { width: 321px; }
.w3 { width: 238px; }
.w4 { width: 125px; }
.w5 { width: 160px; }
.w6 { width: 245px; }
.blue { background: #3478f6; }
.icons { position: relative; z-index: 0; width: 48px; overflow: hidden; color: #cfcac8; font-size: 23px; font-weight: 600; line-height: 34px; padding-top: 382px; text-shadow: 0 2px 3px rgba(0, 0, 0, .7);
  background:
    linear-gradient(90deg, rgba(50, 10, 8, .45) 0, transparent 48px),
    linear-gradient(130deg, #04182b 0, #04182b 36px, transparent 110px),
    linear-gradient(#c9573a 0, #d2593a 230px, #c84f33 380px, #b8432f 560px, #a5332a 760px, #8f2a20 1010px); }
.icons::after { content: ""; position: absolute; z-index: -1; left: 0; right: 0; top: 1036px; bottom: 0; clip-path: polygon(0 37px, 100% 0, 100% 100%, 0 100%);
  background:
    linear-gradient(90deg, rgba(50, 10, 8, .45) 0, transparent 48px),
    linear-gradient(#cc6a2b 0, #c2562a 50px, #b24424 140px, #a03a1f 280px, #8c3019 400px, #802a17 560px, #772616 716px); }
.d1 { padding-left: 5px; }
.d2 { margin-left: -1px; }
</style>
